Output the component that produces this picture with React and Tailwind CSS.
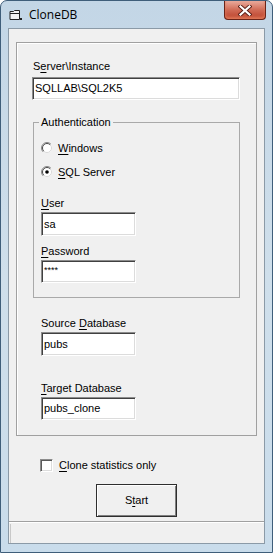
import React from 'react';

const font = { fontFamily: '"Liberation Sans", Arial, sans-serif' };

const Radio = ({ checked }) => (
  <svg width="12" height="12" viewBox="0 0 12 12" className="shrink-0">
    <circle cx="6" cy="6" r="5" fill="#fff" />
    <path d="M9.9 2.1 A5.5 5.5 0 0 0 2.1 9.9" fill="none" stroke="#8a8a8a" strokeWidth="1" />
    <path d="M9.2 2.8 A4.5 4.5 0 0 0 2.8 9.2" fill="none" stroke="#4a4a4a" strokeWidth="1" />
    <path d="M9.2 2.8 A4.5 4.5 0 0 1 2.8 9.2" fill="none" stroke="#d8d8d8" strokeWidth="1" />
    {checked && <circle cx="6" cy="6" r="1.8" fill="#000" />}
  </svg>
);

const TextBox = ({ value, w, h, small }) => (
  <div
    className={`${w} ${h} bg-white border border-t-[#8c8c8c] border-l-[#8c8c8c] border-b-white border-r-white shadow-[inset_1px_1px_0_#404040,inset_-1px_-1px_0_#dcdcdc] flex items-center pl-[2px] text-[11px] text-black`}
  >
    {small ? <span className="text-[9px] leading-none -mt-[3px]">{value}</span> : value}
  </div>
);

const Label = ({ pre, u, post, className }) => (
  <div className={`h-[14px] leading-[14px] text-[11px] text-black ${className || ''}`}>
    {pre}
    <span className="underline underline-offset-[2px]">{u}</span>
    {post}
  </div>
);

export default function App() {
  return (
    <div className="w-[273px] h-[553px] bg-white" style={font}>
      <div className="w-[273px] h-[553px] flex flex-col rounded-t-[7px] border border-[#3f5e7a] bg-gradient-to-b from-[#c3d6e6] via-[#cfdfeb] to-[#c9dceb] overflow-hidden">
        {/* Title bar */}
        <div className="h-[27px] flex items-start shrink-0">
          <svg width="13" height="12" viewBox="0 0 13 12" className="ml-[8px] mt-[8px] shrink-0">
            <path d="M1 2.5 H4.5 L5.5 1.5 H10.5 V10.5 H1 Z" fill="#f2f2f2" stroke="#222" strokeWidth="1" />
            <path d="M1 4.5 H10.5" stroke="#222" strokeWidth="1" />
            <rect x="11" y="9" width="2" height="2" fill="#222" />
          </svg>
          <span
            className="ml-[7px] mt-[6px] text-[12px] leading-[16px] text-black"
            style={{ fontFamily: '"Open Sans", "Noto Sans", sans-serif' }}
          >
            CloneDB
          </span>
          <div className="ml-auto mr-[6px] w-[42px] h-[19px] rounded-b-[4px] border border-t-0 border-[#6a2419] bg-gradient-to-b from-[#e9aa9c] via-[#d06a55] to-[#b83d28] shadow-[inset_0_-2px_3px_#e07a5a] flex items-center justify-center">
            <svg width="14" height="11" viewBox="0 0 14 11">
              <path d="M2.5 1.5 L11.5 9.5 M11.5 1.5 L2.5 9.5" stroke="#5a2018" strokeWidth="4" strokeLinecap="square" />
              <path d="M2.5 1.5 L11.5 9.5 M11.5 1.5 L2.5 9.5" stroke="#fff" strokeWidth="2.2" strokeLinecap="square" />
            </svg>
          </div>
        </div>

        {/* Client area */}
        <div className="mx-[7px] h-[516px] bg-[#f0f0f0] border border-[#8b9aa7] flex flex-col">
          {/* Outer panel */}
          <div className="mt-[13px] mx-[7px] border border-[#a0a0a0] shadow-[inset_1px_1px_0_#fff] pb-[15px]">
            <Label pre="S" u="e" post="rver\Instance" className="mt-[16px] ml-[16px]" />
            <div className="mt-[4px] ml-[15px]">
              <TextBox value="SQLLAB\SQL2K5" w="w-[208px]" h="h-[23px]" />
            </div>

            <fieldset className="mt-[16px] ml-[16px] w-[207px] border border-[#a9a9a9] pl-[5px] pb-[14px]">
              <legend className="px-[2px] text-[11px] leading-[12px] text-black">Authentication</legend>
              <div className="pl-[2px]">
                <div className="mt-[13px] h-[14px] flex items-center gap-[5px] text-[11px] text-black">
                  <Radio />
                  <span>
                    <span className="underline underline-offset-[2px]">W</span>indows
                  </span>
                </div>
                <div className="mt-[10px] h-[14px] flex items-center gap-[5px] text-[11px] text-black">
                  <Radio checked />
                  <span>
                    <span className="underline underline-offset-[2px]">S</span>QL Server
                  </span>
                </div>
                <Label u="U" post="ser" className="mt-[17px]" />
                <div className="mt-[2px]">
                  <TextBox value="sa" w="w-[95px]" h="h-[24px]" />
                </div>
                <Label u="P" post="assword" className="mt-[8px]" />
                <div className="mt-[2px]">
                  <TextBox value="****" w="w-[95px]" h="h-[23px]" small />
                </div>
              </div>
            </fieldset>

            <Label pre="Source " u="D" post="atabase" className="mt-[18px] ml-[24px]" />
            <div className="mt-[2px] ml-[24px]">
              <TextBox value="pubs" w="w-[95px]" h="h-[24px]" />
            </div>
            <Label u="T" post="arget Database" className="mt-[25px] ml-[24px]" />
            <div className="mt-[2px] ml-[24px]">
              <TextBox value="pubs_clone" w="w-[95px]" h="h-[23px]" />
            </div>
          </div>

          {/* Checkbox */}
          <div className="mt-[23px] ml-[31px] h-[13px] flex items-center gap-[6px] text-[11px] text-black">
            <div className="w-[13px] h-[13px] bg-white border border-t-[#8c8c8c] border-l-[#8c8c8c] border-b-white border-r-white shadow-[inset_1px_1px_0_#5a5a5a,inset_-1px_-1px_0_#dcdcdc]" />
            <span>
              <span className="underline underline-offset-[2px]">C</span>lone statistics only
            </span>
          </div>

          {/* Start button */}
          <div className="mt-[12px] ml-[87px] w-[81px] h-[33px] bg-[#f0f0f0] border border-[#2e2e2e] shadow-[inset_1px_1px_0_#fff,inset_-1px_-1px_0_#808080] flex items-center justify-center text-[11px] text-black">
            <span>
              S<span className="underline underline-offset-[2px]">t</span>art
            </span>
          </div>

          {/* Status bar */}
          <div className="mt-[4px] flex-1 border-t border-[#a0a0a0] shadow-[inset_0_1px_0_#fff] flex">
            <div className="ml-[1px] mt-[2px] flex-1 border-l border-[#c8c8c8]" />
          </div>
        </div>
        <div className="flex-1" />
      </div>
    </div>
  );
}
